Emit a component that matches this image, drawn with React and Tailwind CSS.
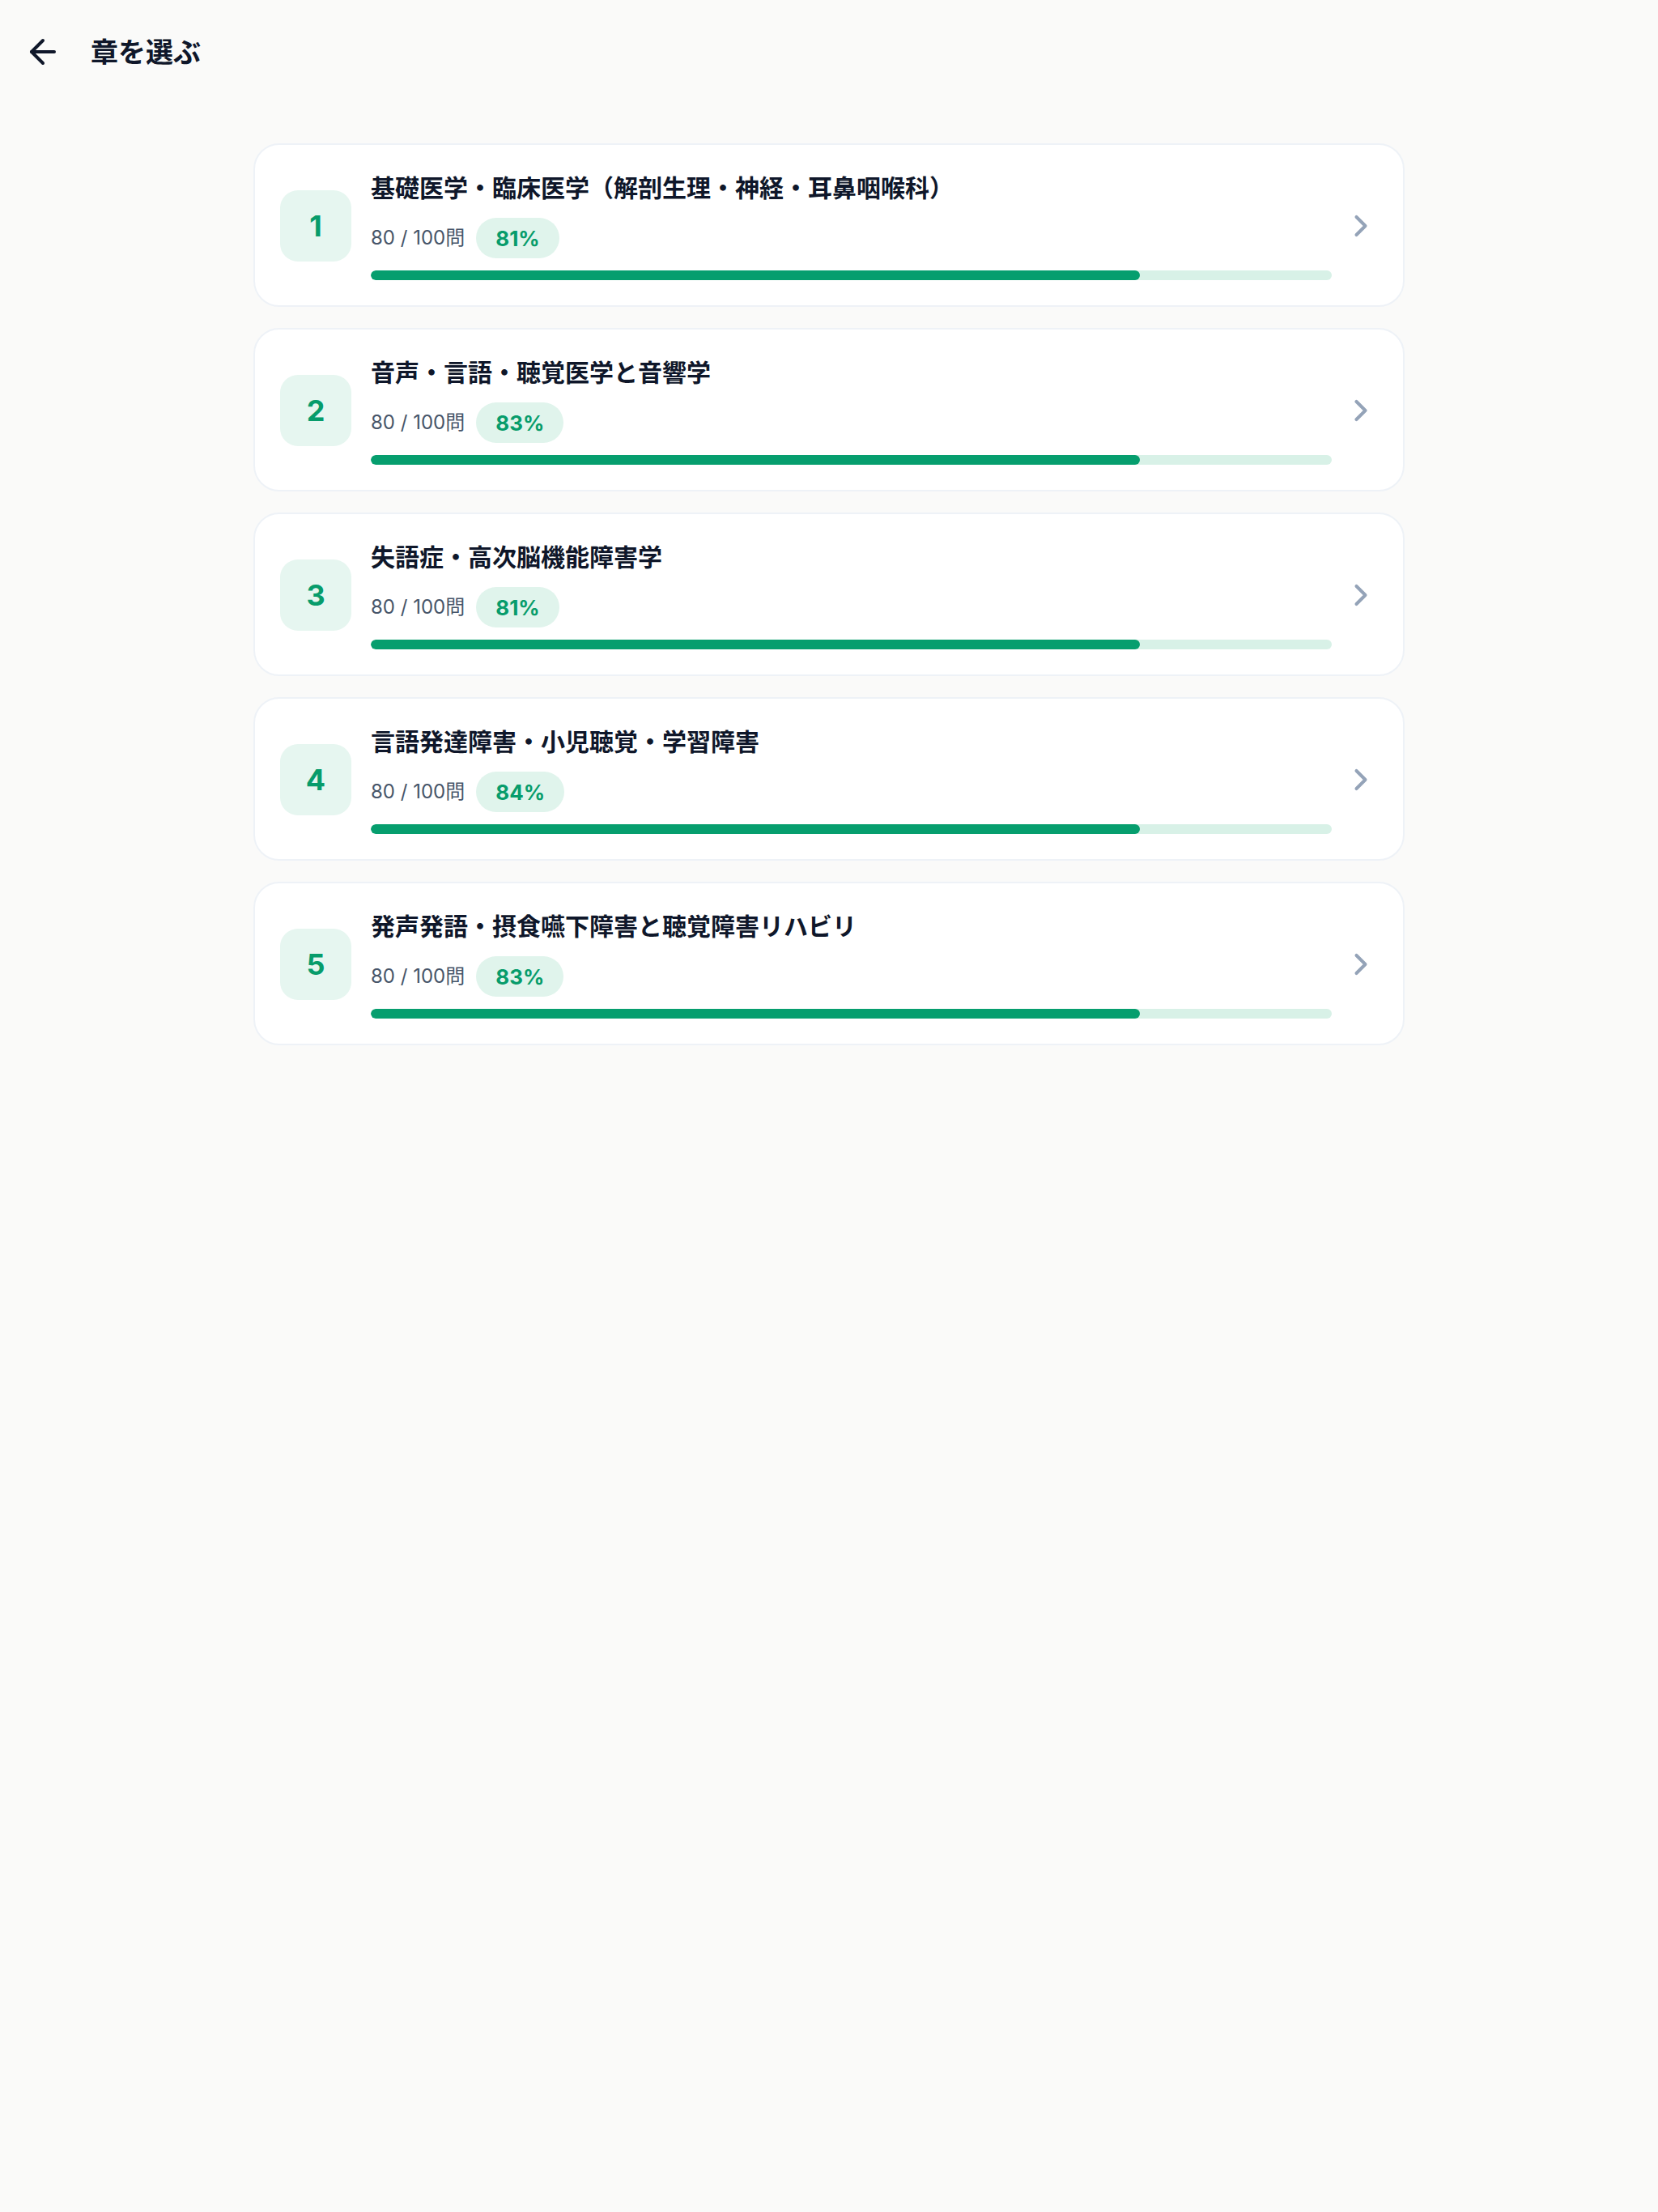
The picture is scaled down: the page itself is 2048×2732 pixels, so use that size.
import React from "react";
import { ArrowLeft, ChevronRight } from "lucide-react";

const chapters = [
  { n: 1, title: "基礎医学・臨床医学（解剖生理・神経・耳鼻咽喉科）", done: 80, total: 100, pct: 81 },
  { n: 2, title: "音声・言語・聴覚医学と音響学", done: 80, total: 100, pct: 83 },
  { n: 3, title: "失語症・高次脳機能障害学", done: 80, total: 100, pct: 81 },
  { n: 4, title: "言語発達障害・小児聴覚・学習障害", done: 80, total: 100, pct: 84 },
  { n: 5, title: "発声発語・摂食嚥下障害と聴覚障害リハビリ", done: 80, total: 100, pct: 83 },
];

function Card({ c }) {
  return (
    <div className="flex items-center bg-white border-2 border-[#eef2f7] rounded-[32px] pl-[31px] pr-[30px] pt-[32px] pb-[31px]">
      <div className="w-[88px] h-[88px] shrink-0 rounded-[22px] bg-[#e6f6f0] flex items-center justify-center text-[36px] font-bold text-[#079c6b]">
        {c.n}
      </div>
      <div className="flex-1 ml-6 min-w-0">
        <div className="text-[30px] leading-[42px] font-bold text-[#0f172a]">{c.title}</div>
        <div className="mt-[16px] h-[50px] flex items-center">
          <span className="text-[24px] text-[#475569]">
            {c.done} / {c.total}問
          </span>
          <span className="ml-[14px] h-[50px] px-[24px] rounded-full bg-[#e0f4ec] flex items-center text-[26px] font-bold text-[#079c6b]">
            {c.pct}%
          </span>
        </div>
        <div className="mt-[15px] h-3 rounded-full bg-[#d8f1e7] overflow-hidden">
          <div
            className="h-full rounded-full bg-[#069e6e]"
            style={{ width: `${(c.done / c.total) * 100}%` }}
          />
        </div>
      </div>
      <ChevronRight className="ml-[14px] shrink-0 text-[#94a3b8]" size={44} strokeWidth={2.2} />
    </div>
  );
}

export default function App() {
  return (
    <div className="min-h-screen bg-[#fafaf9] font-['Inter','Noto_Sans_CJK_JP',sans-serif]">
      <header className="h-[128px] flex items-center pl-[29px]">
        <ArrowLeft size={48} strokeWidth={2} className="text-[#0f172a]" />
        <h1 className="ml-[35px] text-[34px] font-bold text-[#0f172a]">章を選ぶ</h1>
      </header>
      <main className="pt-[49px] w-[1422px] mx-auto flex flex-col gap-[26px]">
        {chapters.map((c) => (
          <Card key={c.n} c={c} />
        ))}
      </main>
    </div>
  );
}
